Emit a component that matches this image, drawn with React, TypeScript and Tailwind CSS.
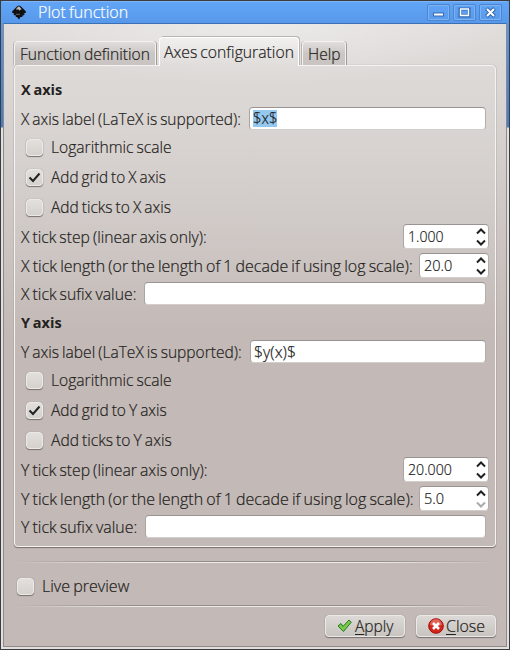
import React, { useLayoutEffect, useRef, useState } from "react";

/* Text condensed or widened so that it takes exactly `w` pixels. */
function Fit({ w, className = "", children }: { w: number; className?: string; children: React.ReactNode }) {
  const ref = useRef<HTMLSpanElement>(null);
  const [scale, setScale] = useState(1);
  useLayoutEffect(() => {
    if (ref.current) setScale(w / ref.current.offsetWidth);
  }, [w]);
  return (
    <span className={"block shrink-0 whitespace-nowrap " + className} style={{ width: w }}>
      <span ref={ref} className="inline-block origin-left" style={{ transform: `scaleX(${scale})` }}>
        {children}
      </span>
    </span>
  );
}

function Check({ label, w, checked = false, className = "" }: { label: string; w: number; checked?: boolean; className?: string }) {
  return (
    <div className={"flex h-[18px] items-center " + className}>
      <span className="mt-px mr-2 flex size-[17px] shrink-0 items-center justify-center rounded-[4px] border border-[#eceae8] bg-linear-to-b from-[#e2dfdc] to-[#d5d2ce] shadow-[0_1px_1px_#77716e,0_0_1px_#8f8986]">
        {checked && (
          <svg width="13" height="13" viewBox="0 0 13 13" fill="none" stroke="#222" strokeWidth="2">
            <path d="M1.5 6.5 5 10 11.5 2.5" />
          </svg>
        )}
      </span>
      <Fit w={w}>{label}</Fit>
    </div>
  );
}

const FIELD =
  "flex items-center rounded-[4px] border border-t-[#999391] border-r-[#b3adab] border-b-[#d2cecc] border-l-[#aaa4a2] bg-white text-[#1c1b1a]";

function TextRow({ label, w, value, vw = 0, selected = false, className = "" }: { label: string; w: number; value?: string; vw?: number; selected?: boolean; className?: string }) {
  return (
    <div className={"mr-[9px] flex h-[23px] items-center " + className}>
      <Fit w={w}>{label}</Fit>
      <div className={FIELD + " ml-2 h-[23px] flex-1 pl-[3px]"}>
        {value && <Fit w={vw} className={selected ? "h-[17px] bg-[#94c8ef] leading-[17px]" : ""}>{value}</Fit>}
      </div>
    </div>
  );
}

function SpinRow({ label, w, value, vw, wide = false, atMin = false, className = "" }: { label: string; w: number; value: string; vw: number; wide?: boolean; atMin?: boolean; className?: string }) {
  return (
    <div className={"mr-[6px] flex h-[25px] items-center justify-between " + className}>
      <Fit w={w}>{label}</Fit>
      <div className={FIELD + " h-[25px] justify-between pr-[2px] pl-[4px] text-[14.5px] " + (wide ? "w-[86px]" : "w-[70px]")}>
        <Fit w={vw}>{value}</Fit>
        <svg width="10" height="19" viewBox="0 0 10 19" fill="none" strokeWidth="2">
          <path d="M1 6.5 5 2.5 9 6.5" stroke="#202020" />
          <path d="M1 13.5 5 17.5 9 13.5" stroke={atMin ? "#aaa" : "#202020"} />
        </svg>
      </div>
    </div>
  );
}

function AxisSection({ axis, extra, value, vw, selected, step, stepW, length, lengthW, atMin }: { axis: string; extra: number; value: string; vw: number; selected?: boolean; step: string; stepW: number; length: string; lengthW: number; atMin?: boolean }) {
  return (
    <section className="h-[233px]">
      <Fit w={41} className="h-[20px] text-[14.5px] leading-[20px] font-bold [-webkit-text-stroke:0]">{axis} axis</Fit>
      <TextRow className="mt-[7px]" label={`${axis} axis label (LaTeX is supported):`} w={220 + extra} value={value} vw={vw} selected={selected} />
      <Check className="mt-[8px] ml-[5px]" label="Logarithmic scale" w={121} />
      <Check className="mt-[12px] ml-[5px]" label={`Add grid to ${axis} axis`} w={115 + extra} checked />
      <Check className="mt-[12px] ml-[5px]" label={`Add ticks to ${axis} axis`} w={120 + extra} />
      <SpinRow className="mt-[8px]" label={`${axis} tick step (linear axis only):`} w={186 + extra} value={step} vw={stepW} wide />
      <SpinRow className="mt-[4px]" label={`${axis} tick length (or the length of 1 decade if using log scale):`} w={392 + extra} value={length} vw={lengthW} atMin={atMin} />
      <TextRow className="mt-[4px]" label={`${axis} tick sufix value:`} w={115 + extra} />
    </section>
  );
}

function WinButton({ children }: { children: React.ReactNode }) {
  return (
    <div className="flex h-[17px] w-[23px] items-center justify-center rounded-[2px] border border-[#4a86d0] shadow-[inset_0_0_0_1px_#7db2f3]">
      <svg width="13" height="11" viewBox="0 0 13 11" fill="none">{children}</svg>
    </div>
  );
}

function Tab({ label, w, className }: { label: string; w: number; className: string }) {
  return (
    <div className={"flex h-[24px] items-center rounded-t-[4px] border border-b-0 border-[#f3f2f1] bg-linear-to-b from-[#e0dddb] via-[#cbc7c4] via-50% to-[#c9c4c1] shadow-[1px_0_0_#a19b98,-1px_0_0_#b9b4b1] " + className}>
      <Fit w={w}>{label}</Fit>
    </div>
  );
}

const Separator = () => (
  <div className="h-[2px]">
    <div className="h-px bg-[linear-gradient(90deg,transparent,#938d8a_25%,#938d8a_75%,transparent)]" />
    <div className="h-px bg-[linear-gradient(90deg,transparent,#eeebea_25%,#eeebea_75%,transparent)]" />
  </div>
);

const BUTTON =
  "flex h-[22px] w-[80px] items-center rounded-[4px] border border-[#ebe9e7] bg-linear-to-b from-[#dcd9d6] to-[#c8c4c0] shadow-[0_1px_1px_#77716e,0_0_1px_#8f8986]";

export default function App() {
  return (
    <div className="h-[650px] w-[510px] bg-[#3c3c3e] p-px font-['Open_Sans','Noto_Sans',sans-serif] text-[15.5px] leading-[20px] font-light text-[#242220] [-webkit-text-stroke:0.2px] [word-spacing:-1px]">
      <div className="flex h-full flex-col bg-[linear-gradient(#62a5f5,#5798ea_22px,#3f7cc9_126px,#e2e0df_127px)] px-[2px] pb-[2px]">
        <header className="flex h-[22px] shrink-0 items-center border-t border-[#7db5f8] pr-[5px] pl-[8px] text-white">
          <svg width="16" height="15" viewBox="0 0 16 15" className="mr-[11px]">
            <path d="M8 .5Q9.2.5 10.5 2L14.5 6Q16 8 12.5 8.5 15 10 11.5 10.5 12 12 9.5 12L8 14.5 6 12Q4 12 5 10.5 1 10 3.5 8.5 0 8 1.5 6L5.5 2Q6.8.5 8 .5Z" fill="#101010" />
            <path d="M8 1.2 11 4.4 9.8 4.2 8.6 5.8 7.2 4.3 5 4.8 6 2.8Z" fill="#b9bcc0" />
            <path d="M5 9.3H9" stroke="#777" strokeWidth=".8" />
          </svg>
          <Fit w={90} className="mt-[-1px] mr-auto">Plot function</Fit>
          <div className="flex gap-[3px]">
            <WinButton>
              <path d="M1 7.5H12" stroke="#346aae" strokeWidth="4" />
              <path d="M2 7.5H11" stroke="white" strokeWidth="2" />
            </WinButton>
            <WinButton>
              <rect x="2" y="2" width="9" height="7" stroke="#346aae" strokeWidth="3" />
              <path d="M2.5 2V8.5H10.5V2M2 2H11" stroke="white" strokeWidth="1.4" />
            </WinButton>
            <WinButton>
              <path d="M2.5 1.5 10.5 9.5M10.5 1.5 2.5 9.5" stroke="#346aae" strokeWidth="4" />
              <path d="M3 2 10 9M10 2 3 9" stroke="white" strokeWidth="2" />
            </WinButton>
          </div>
        </header>
        <main className="flex min-h-0 flex-1 flex-col border-t border-r border-b border-l border-t-[#3b70b5] border-r-[#8f8987] border-b-[#8f8987] border-l-[#8f8987] bg-[radial-gradient(ellipse_250px_60px_at_50%_0,#efeeedcc,#efeeed00),linear-gradient(#e0dddb,#c3bab7_310px)] pt-[13px] pr-[10px] pl-[10px]">
          <nav className="z-10 flex h-[28px] shrink-0 items-end">
            <Tab label="Function definition" w={130} className="w-[142px] pl-[5px]" />
            <div className="mb-[-1px] ml-[3px] flex h-[29px] w-[140px] items-center rounded-t-[4px] border border-b-0 border-white bg-linear-to-b from-[#f1f0ef] to-[#dfdcda] pl-[4px] shadow-[1px_-1px_0_#b8b4b1]">
              <Fit w={130}>Axes configuration</Fit>
            </div>
            <Tab label="Help" w={32} className="ml-[3px] w-[44px] pl-[5px]" />
          </nav>
          <div className="h-[482px] shrink-0 rounded-[4px] border border-[#f5f3f2] bg-[linear-gradient(#dfdcda66,#c3bab700_240px)] pt-[14px] pl-[6px] shadow-[0_1px_1px_#77716e,0_0_1px_#8f8986]">
            <AxisSection axis="X" extra={0} value="$x$" vw={24} selected step="1.000" stepW={36} length="20.0" lengthW={28} />
            <AxisSection axis="Y" extra={1} value="$y(x)$" vw={42} step="20.000" stepW={44} length="5.0" lengthW={20} atMin />
          </div>
          <div className="mt-[14px]">
            <Separator />
            <Check className="mt-[14px] ml-[3px]" label="Live preview" w={87} />
            <div className="mt-[10px]"><Separator /></div>
          </div>
          <div className="mt-[8px] flex justify-end gap-[11px]">
            <div className={BUTTON + " pl-[11px]"}>
              <svg width="15" height="14" viewBox="0 0 15 14" className="mr-[3px]">
                <path d="M1 7 4 4.5 6 7.5 12 1 14.3 3.2 6.5 12.5Z" fill="#78c94c" stroke="#277a18" strokeLinejoin="round" />
              </svg>
              <Fit w={38}><u className="underline-offset-2">A</u>pply</Fit>
            </div>
            <div className={BUTTON + " pl-[11px]"}>
              <svg width="16" height="16" viewBox="0 0 16 16" className="mt-[-1px] mr-[2px]">
                <circle cx="8" cy="8" r="7.3" fill="#d3261b" stroke="#a30c08" />
                <path d="M2 7A6 6 0 0 1 14 7Q8 9 2 7Z" fill="#ec8b7e" opacity=".6" />
                <path d="M5 5 11 11M11 5 5 11" stroke="white" strokeWidth="2.6" />
              </svg>
              <Fit w={39}><u className="underline-offset-2">C</u>lose</Fit>
            </div>
          </div>
        </main>
      </div>
    </div>
  );
}
